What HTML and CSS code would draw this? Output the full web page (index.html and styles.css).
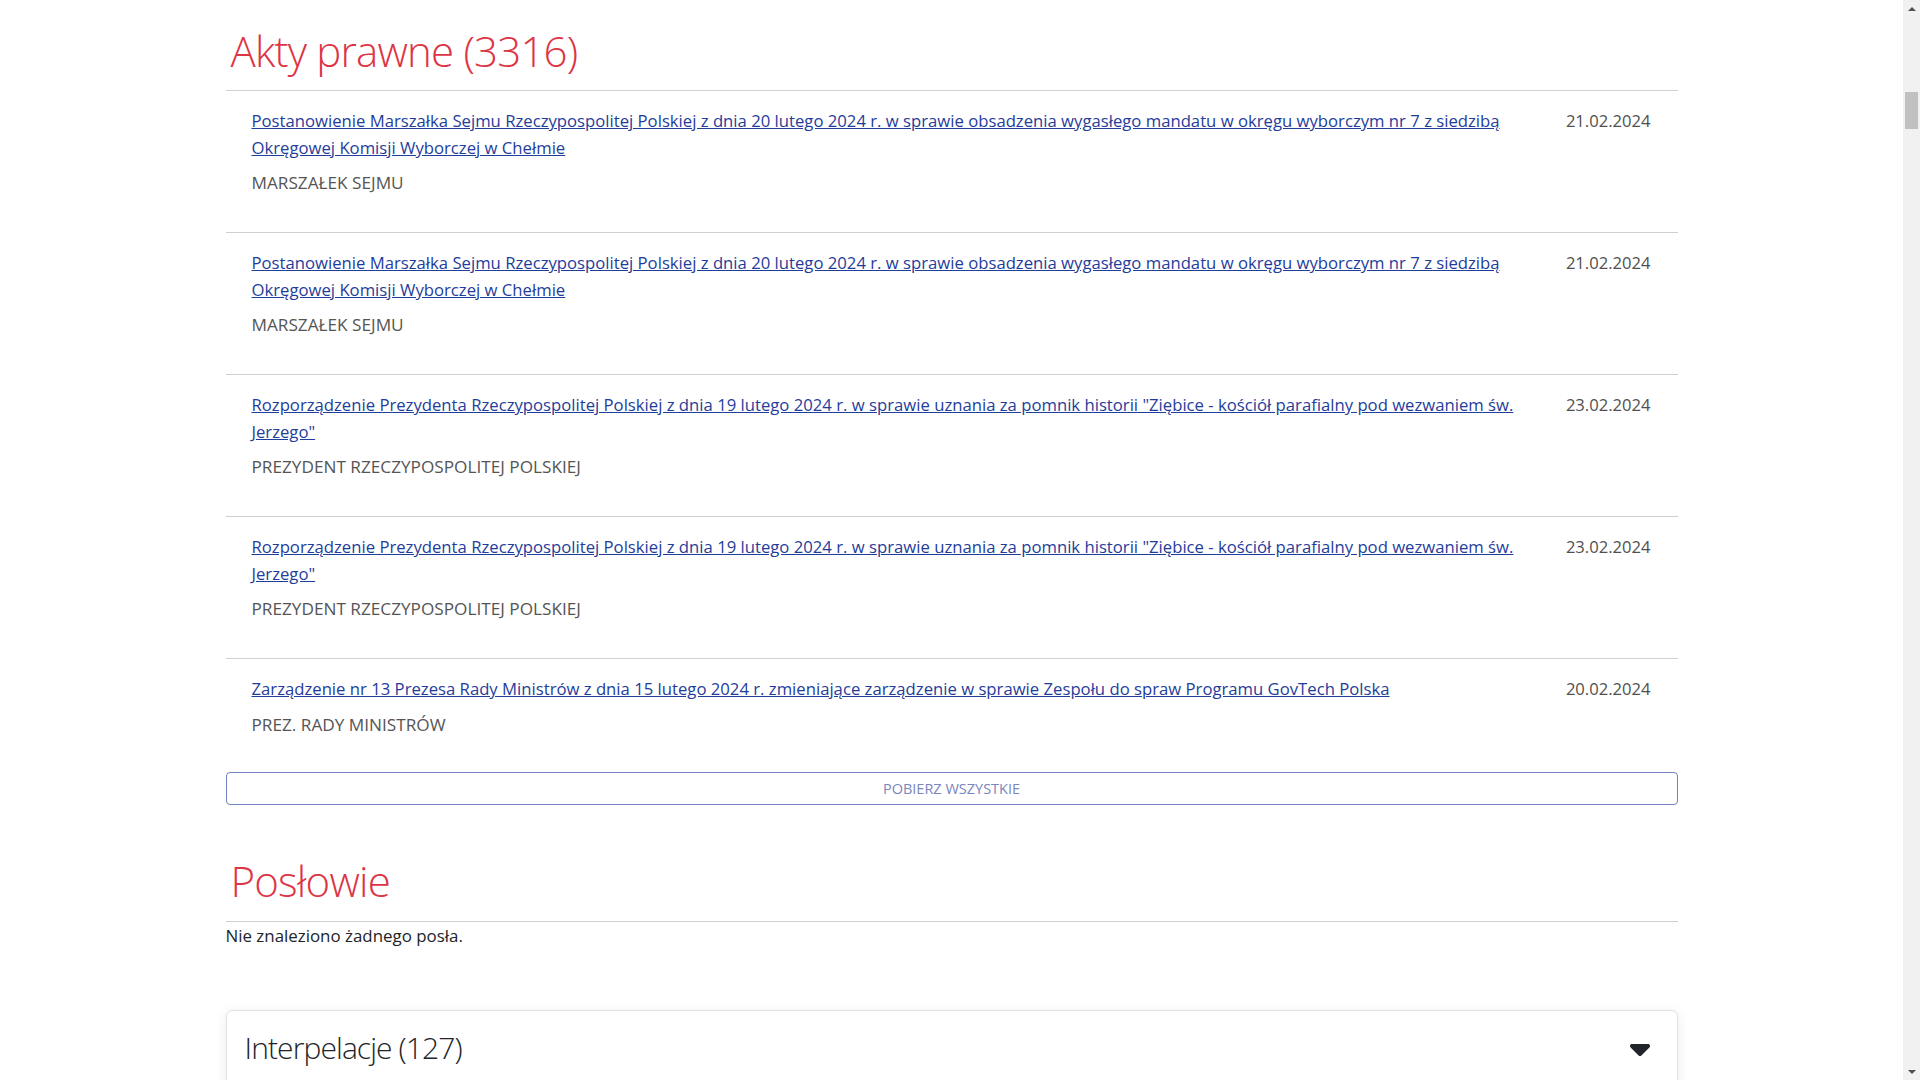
FILE: index.html
```html
<!DOCTYPE html>
<html lang="pl">
<head>
<meta charset="utf-8">
<title>Akty prawne</title>
<link rel="stylesheet" href="styles.css">
</head>
<body>
<div class="viewport">
  <main class="page">
    <div class="container">
      <section class="section">
        <h2 class="section-title">Akty prawne (3316)</h2>
        <ul class="act-list">
          <li class="act">
            <div class="act-body">
              <a class="act-link" href="#">Postanowienie Marszałka Sejmu Rzeczypospolitej Polskiej z dnia 20 lutego 2024 r. w sprawie obsadzenia wygasłego mandatu w okręgu wyborczym nr 7 z siedzibą Okręgowej Komisji Wyborczej w Chełmie</a>
              <div class="act-agency">MARSZAŁEK SEJMU</div>
            </div>
            <div class="act-date">21.02.2024</div>
          </li>
          <li class="act">
            <div class="act-body">
              <a class="act-link" href="#">Postanowienie Marszałka Sejmu Rzeczypospolitej Polskiej z dnia 20 lutego 2024 r. w sprawie obsadzenia wygasłego mandatu w okręgu wyborczym nr 7 z siedzibą Okręgowej Komisji Wyborczej w Chełmie</a>
              <div class="act-agency">MARSZAŁEK SEJMU</div>
            </div>
            <div class="act-date">21.02.2024</div>
          </li>
          <li class="act">
            <div class="act-body">
              <a class="act-link" href="#">Rozporządzenie Prezydenta Rzeczypospolitej Polskiej z dnia 19 lutego 2024 r. w sprawie uznania za pomnik historii "Ziębice - kościół parafialny pod wezwaniem św. Jerzego"</a>
              <div class="act-agency">PREZYDENT RZECZYPOSPOLITEJ POLSKIEJ</div>
            </div>
            <div class="act-date">23.02.2024</div>
          </li>
          <li class="act">
            <div class="act-body">
              <a class="act-link" href="#">Rozporządzenie Prezydenta Rzeczypospolitej Polskiej z dnia 19 lutego 2024 r. w sprawie uznania za pomnik historii "Ziębice - kościół parafialny pod wezwaniem św. Jerzego"</a>
              <div class="act-agency">PREZYDENT RZECZYPOSPOLITEJ POLSKIEJ</div>
            </div>
            <div class="act-date">23.02.2024</div>
          </li>
          <li class="act act-last">
            <div class="act-body">
              <a class="act-link" href="#">Zarządzenie nr 13 Prezesa Rady Ministrów z dnia 15 lutego 2024 r. zmieniające zarządzenie w sprawie Zespołu do spraw Programu GovTech Polska</a>
              <div class="act-agency">PREZ. RADY MINISTRÓW</div>
            </div>
            <div class="act-date">20.02.2024</div>
          </li>
        </ul>
        <button class="btn-outline" type="button">POBIERZ WSZYSTKIE</button>
      </section>

      <section class="section">
        <h2 class="section-title">Posłowie</h2>
        <p class="empty-note">Nie znaleziono żadnego posła.</p>
      </section>

      <section class="card">
        <div class="card-header">
          <h3 class="card-title">Interpelacje (127)</h3>
          <svg class="caret" width="20" height="32" viewBox="0 0 320 512" aria-hidden="true"><path d="M137.4 374.6c12.5 12.5 32.8 12.5 45.3 0l128-128c9.2-9.2 11.9-22.9 6.9-34.9s-16.6-19.8-29.6-19.8L32 192c-12.9 0-24.6 7.8-29.6 19.8s-2.2 25.7 6.9 34.9l128 128z"/></svg>
        </div>
        <div class="card-body"></div>
      </section>
    </div>
  </main>
  <aside class="scrollbar" aria-hidden="true">
    <div class="sb-btn"><span class="sb-arrow sb-up"></span></div>
    <div class="sb-track"><div class="sb-thumb"></div></div>
    <div class="sb-btn"><span class="sb-arrow sb-down"></span></div>
  </aside>
</div>
</body>
</html>
```

FILE: styles.css
```css
html, body {
  margin: 0;
  padding: 0;
  height: 100%;
  overflow: hidden;
  background: #fff;
}

body {
  font-family: "Open Sans", "Noto Sans", "Liberation Sans", sans-serif;
  font-size: 16.7px;
  line-height: 1.5;
  color: #212529;
}

.viewport {
  display: flex;
  height: 100vh;
}

.page {
  flex: 1;
  overflow: hidden;
}

.container {
  max-width: 1452px;
  margin: 0 auto;
}

.section + .section {
  margin-top: 25px;
}

.section-title {
  margin: 0;
  padding: 26px 0 14px 5px;
  font-size: 42px;
  font-weight: 300;
  line-height: 1.2;
  letter-spacing: -0.8px;
  color: #dc3545;
  border-bottom: 1px solid #cfcfcf;
}

.act-list {
  list-style: none;
  margin: 0;
  padding: 0;
}

.act {
  display: grid;
  grid-template-columns: 1fr auto;
  column-gap: 27px;
  padding: 17px 27px 35.5px 26px;
}

.act + .act {
  border-top: 1px solid #cfcfcf;
}

.act-last {
  padding-bottom: 34px;
}

.act-link {
  color: #1f3d9b;
  text-decoration: underline;
  font-size: 16.7px;
  line-height: 26.5px;
}

.act-agency {
  margin-top: 9px;
  color: #555;
  font-size: 17.2px;
  line-height: 26.5px;
}

.act-date {
  color: #505050;
  font-size: 16.6px;
  line-height: 26.5px;
}

.btn-outline {
  display: block;
  width: 100%;
  height: 33px;
  margin: 0;
  padding: 0;
  background: #fff;
  border: 1px solid #7282c2;
  border-radius: 4px;
  font-family: inherit;
  font-size: 14.5px;
  color: #7a86bd;
  text-align: center;
}

.empty-note {
  margin: 0;
  padding-top: 2px;
  font-size: 16.9px;
  line-height: 24px;
  color: #212529;
}

.card {
  margin-top: 62px;
  border: 1px solid #e0e0e0;
  border-radius: 6px;
  box-shadow: 0 2px 12px rgba(0, 0, 0, 0.08);
  height: 200px;
}

.card-header {
  display: flex;
  align-items: center;
  justify-content: space-between;
  padding: 19px 27px 0 18px;
}

.card-title {
  margin: 0;
  font-size: 30px;
  font-weight: 300;
  line-height: 1.2;
  letter-spacing: -0.9px;
  color: #212529;
}

.caret {
  fill: #212529;
  margin-top: 0;
}

/* faux window scrollbar */
.scrollbar {
  width: 17px;
  flex: 0 0 17px;
  display: flex;
  flex-direction: column;
  background: #f1f1f1;
}

.sb-btn {
  height: 17px;
  display: flex;
  align-items: center;
  justify-content: center;
}

.sb-arrow {
  width: 0;
  height: 0;
  border-left: 4px solid transparent;
  border-right: 4px solid transparent;
}

.sb-up {
  border-bottom: 4px solid #505050;
}

.sb-down {
  border-top: 4px solid #505050;
}

.sb-track {
  flex: 1;
  padding: 0 2px;
}

.sb-thumb {
  margin-top: 75px;
  height: 37px;
  background: #c1c1c1;
}
```
